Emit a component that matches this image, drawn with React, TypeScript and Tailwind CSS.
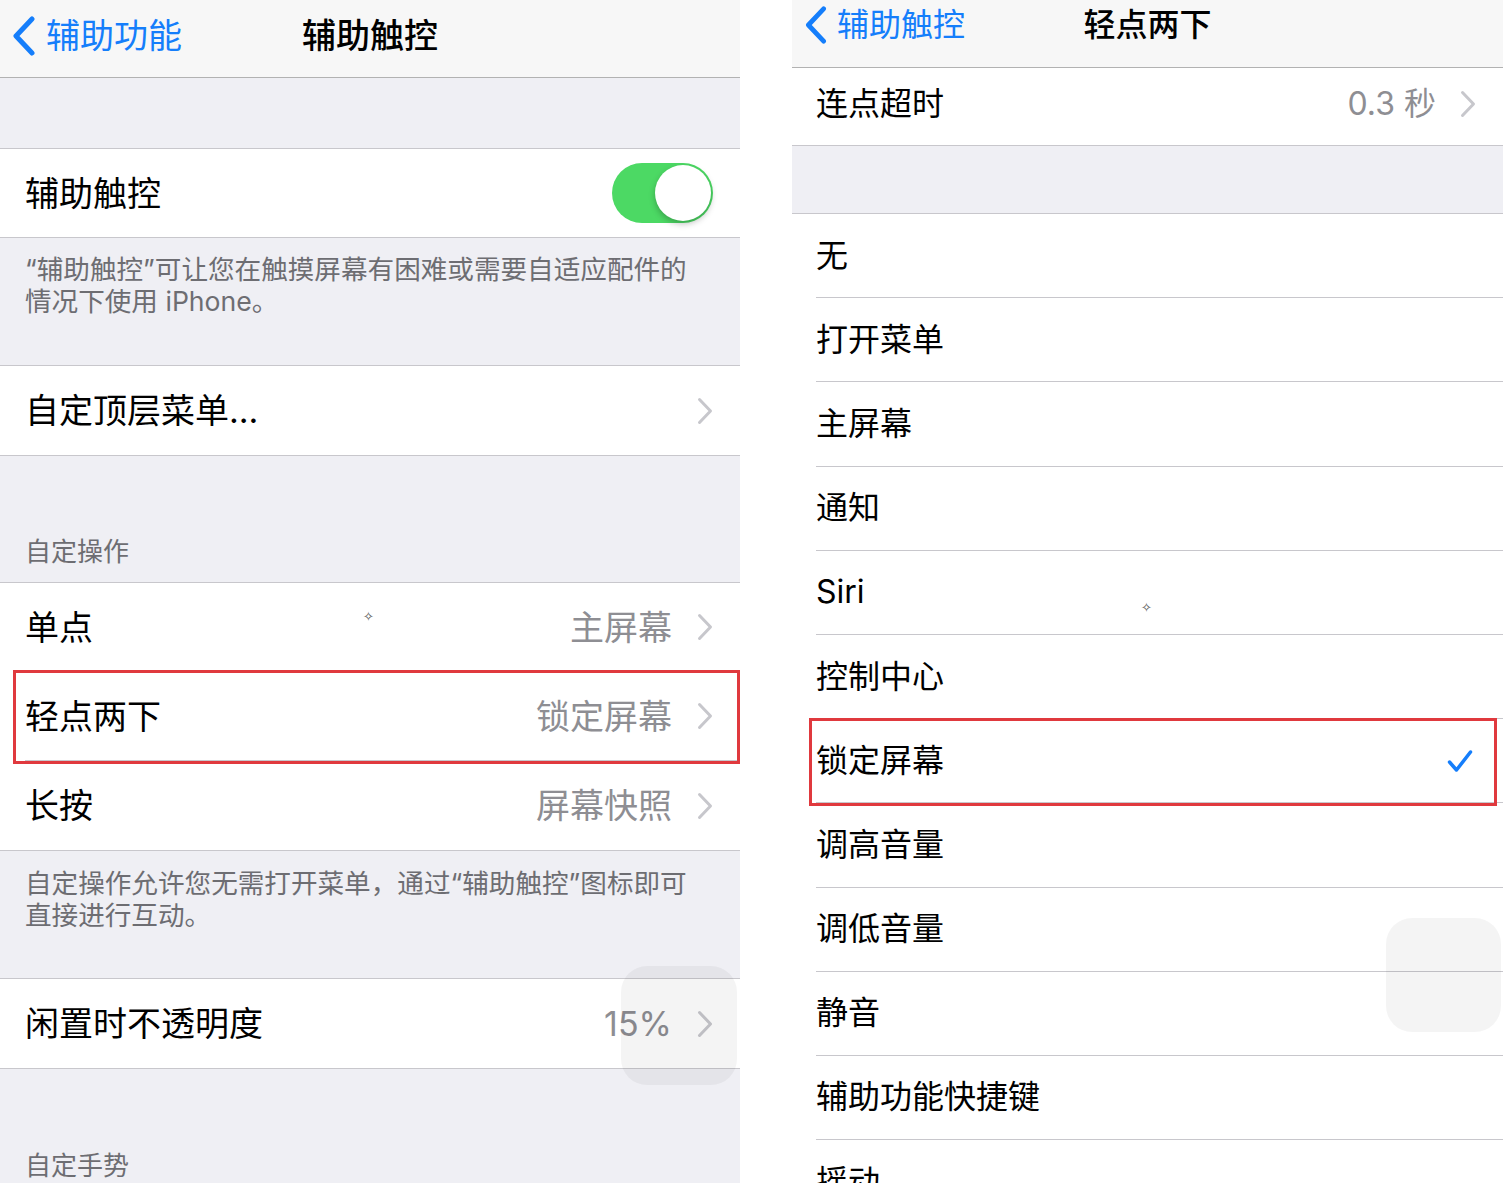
import React from 'react';

const font = "font-['Inter','Noto_Sans_CJK_SC',sans-serif]";

const BackChevron = ({ h = 40 }: { h?: number }) => (
  <svg width={26} height={h} viewBox="0 0 26 40" fill="none">
    <path d="M21 3L5 20l16 17" stroke="#157efb" strokeWidth="5" strokeLinecap="round" strokeLinejoin="round" />
  </svg>
);

const Chevron = () => (
  <svg width="16" height="28" viewBox="0 0 16 28" fill="none">
    <path d="M2.5 2.5L13.5 14L2.5 25.5" stroke="#c7c7cc" strokeWidth="3" strokeLinecap="round" strokeLinejoin="round" />
  </svg>
);

const Check = () => (
  <svg width="26" height="24" viewBox="0 0 26 24" fill="none">
    <path d="M2.5 13l7 8L23.5 3" stroke="#157efb" strokeWidth="3.5" strokeLinecap="round" strokeLinejoin="round" />
  </svg>
);

const Toggle = () => (
  <div className="flex h-[60px] w-[101px] items-center justify-end rounded-full bg-[#4cd964] p-[2px]">
    <div className="h-[56px] w-[56px] rounded-full bg-white shadow-[0_3px_6px_rgba(0,0,0,0.25)]" />
  </div>
);

function LeftRow({ label, value, last = true }: { label: string; value?: string; last?: boolean }) {
  return (
    <div className="flex bg-white pl-[25px]">
      <div
        className={`flex h-[89px] flex-1 items-center justify-between pr-[27px] ${last ? '' : 'border-b border-[#c8c7cc]'}`}
      >
        <span className="text-[34px] text-black">{label}</span>
        <div className="flex items-center gap-[25px]">
          {value && <span className="text-[34px] text-[#8e8e93]">{value}</span>}
          <Chevron />
        </div>
      </div>
    </div>
  );
}

function LeftPanel() {
  return (
    <div className="relative flex h-[1183px] w-[740px] shrink-0 flex-col overflow-hidden bg-[#efeff4]">
      <div className="grid h-[78px] shrink-0 grid-cols-[1fr_auto_1fr] items-center border-b border-[#b2b2b2] bg-[#f7f7f7] pb-[6px]">
        <div className="flex items-center gap-[9px] pl-[11px] text-[34px] text-[#157efb]">
          <BackChevron />
          <span>辅助功能</span>
        </div>
        <div className="text-[34px] font-medium text-black">辅助触控</div>
        <div />
      </div>

      <div className="h-[70px] shrink-0" />

      <div className="flex h-[90px] shrink-0 items-center justify-between border-y border-[#c8c7cc] bg-white pl-[25px] pr-[27px]">
        <span className="text-[34px] text-black">辅助触控</span>
        <Toggle />
      </div>

      <div className="h-[127px] shrink-0 whitespace-nowrap px-[25px] pt-[15px] text-[26.6px] leading-[32px] text-[#6d6d72]">
        “辅助触控”可让您在触摸屏幕有困难或需要自适应配件的
        <br />
        情况下使用 iPhone。
      </div>

      <div className="shrink-0 border-y border-[#c8c7cc]">
        <LeftRow label="自定顶层菜单..." />
      </div>

      <div className="flex h-[126px] shrink-0 items-end px-[25px] pb-[14px] text-[26px] leading-[32px] text-[#6d6d72]">
        自定操作
      </div>

      <div className="shrink-0 border-y border-[#c8c7cc]">
        <LeftRow label="单点" value="主屏幕" last={false} />
        <LeftRow label="轻点两下" value="锁定屏幕" last={false} />
        <LeftRow label="长按" value="屏幕快照" />
      </div>

      <div className="h-[127px] shrink-0 whitespace-nowrap px-[25px] pt-[16px] text-[26.6px] leading-[32px] text-[#6d6d72]">
        自定操作允许您无需打开菜单，通过“辅助触控”图标即可
        <br />
        直接进行互动。
      </div>

      <div className="shrink-0 border-y border-[#c8c7cc]">
        <LeftRow label="闲置时不透明度" value="15%" />
      </div>

      <div className="flex-1 px-[25px] pt-[81px] text-[26px] leading-[32px] text-[#6d6d72]">自定手势</div>

      {/* annotation + overlays */}
      <div className="absolute left-[13px] top-[670px] h-[94px] w-[727px] border-[3px] border-[#e0393e]" />
      <div className="absolute left-[621px] top-[966px] h-[119px] w-[116px] rounded-[26px] bg-black/[0.045]" />
      <span className="absolute left-[363px] top-[607px] text-[13px] text-[#555]">✧</span>
    </div>
  );
}

const options = ['无', '打开菜单', '主屏幕', '通知', 'Siri', '控制中心', '锁定屏幕', '调高音量', '调低音量', '静音', '辅助功能快捷键', '摇动'];

function RightPanel() {
  return (
    <div className="relative flex h-[1183px] w-[711px] shrink-0 flex-col overflow-hidden bg-[#efeff4]">
      <div className="grid h-[68px] shrink-0 grid-cols-[1fr_auto_1fr] items-center border-b border-[#b2b2b2] bg-[#f7f7f7] pb-[18px]">
        <div className="flex items-center gap-[8px] pl-[11px] text-[32px] text-[#157efb]">
          <BackChevron h={38} />
          <span>辅助触控</span>
        </div>
        <div className="text-[32px] font-medium text-black">轻点两下</div>
        <div />
      </div>

      <div className="flex h-[78px] shrink-0 items-center justify-between border-b border-[#c8c7cc] bg-white pb-[6px] pl-[24px] pr-[27px]">
        <span className="text-[32px] text-black">连点超时</span>
        <div className="flex items-center gap-[24px]">
          <span className="text-[32px] text-[#8e8e93]">0.3 秒</span>
          <Chevron />
        </div>
      </div>

      <div className="h-[67px] shrink-0" />

      <div className="shrink-0 border-t border-[#c8c7cc] bg-white pl-[24px]">
        {options.map((o) => (
          <div key={o} className="flex h-[84.2px] items-center justify-between border-b border-[#c8c7cc] pr-[30px]">
            <span className="text-[32px] text-black">{o}</span>
            {o === '锁定屏幕' && <Check />}
          </div>
        ))}
      </div>

      <div className="absolute left-[17px] top-[718px] h-[88px] w-[688px] border-[3px] border-[#e0393e]" />
      <div className="absolute left-[594px] top-[918px] h-[114px] w-[115px] rounded-[26px] bg-black/[0.045]" />
      <span className="absolute left-[349px] top-[598px] text-[13px] text-[#555]">✧</span>
    </div>
  );
}

export default function App() {
  return (
    <div className={`flex h-[1183px] w-[1503px] gap-[52px] overflow-hidden bg-white ${font}`}>
      <LeftPanel />
      <RightPanel />
    </div>
  );
}
